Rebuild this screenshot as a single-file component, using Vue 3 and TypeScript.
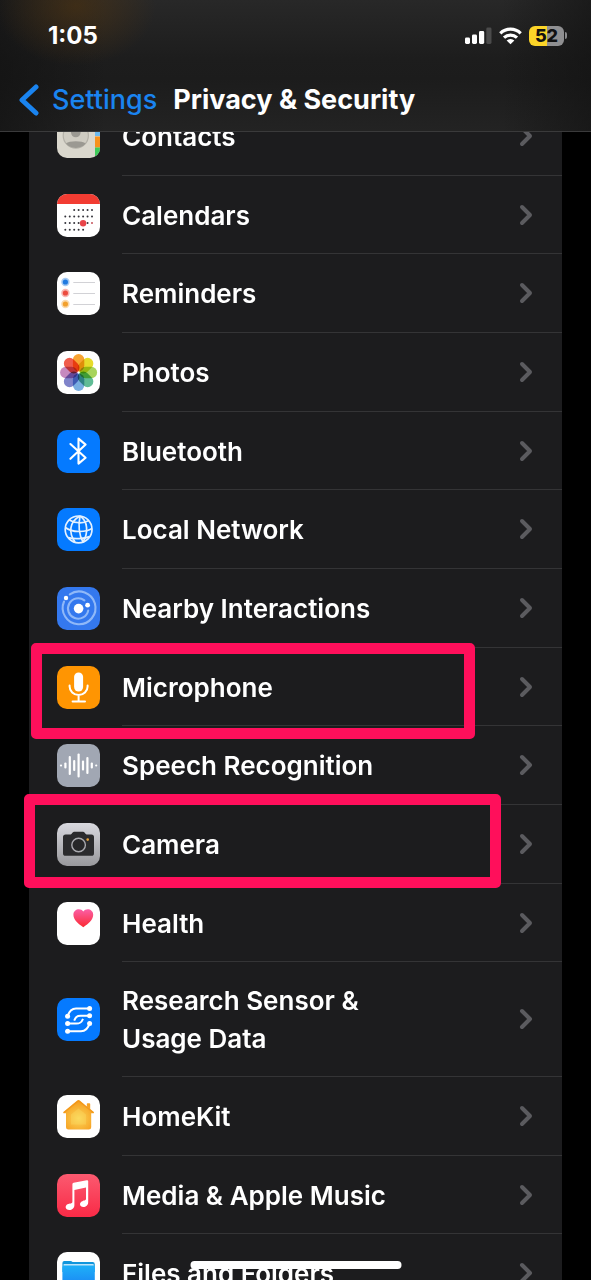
<script setup lang="ts">
interface Highlight {
  name: string
}

interface Row {
  id: string
  label: string
  lines?: string[]
  highlight?: Highlight
}

interface Dot {
  x: number
  y: number
  fill: string
}

const rows: Row[] = [
  { id: 'contacts', label: 'Contacts' },
  { id: 'calendars', label: 'Calendars' },
  { id: 'reminders', label: 'Reminders' },
  { id: 'photos', label: 'Photos' },
  { id: 'bluetooth', label: 'Bluetooth' },
  { id: 'network', label: 'Local Network' },
  { id: 'nearby', label: 'Nearby Interactions' },
  { id: 'microphone', label: 'Microphone', highlight: { name: 'mark-microphone' } },
  { id: 'speech', label: 'Speech Recognition' },
  { id: 'camera', label: 'Camera', highlight: { name: 'mark-camera' } },
  { id: 'health', label: 'Health' },
  { id: 'research', label: 'Research Sensor & Usage Data', lines: ['Research Sensor &', 'Usage Data'] },
  { id: 'homekit', label: 'HomeKit' },
  { id: 'music', label: 'Media & Apple Music' },
  { id: 'files', label: 'Files and Folders' },
]

// First and last filled column of each week in the calendar icon
const weeks: [number, number][] = [[2, 6], [0, 6], [0, 6], [0, 4]]
const calendarDots: Dot[] = weeks.flatMap(([from, to], week) =>
  Array.from({ length: to - from + 1 }, (_, i) => ({
    x: 8.3 + (from + i) * 4.45,
    y: 16 + week * 6.55,
    fill: week === 2 && from + i === 6 ? '#c4525a' : '#33333a',
  })),
)

const reminderDots = [
  { y: 10, color: '#1f7ae0' },
  { y: 21, color: '#ec4b3f' },
  { y: 32, color: '#f2a02c' },
]

const petals = ['#f79a1c', '#e5d813', '#9fd04a', '#4fb58a', '#6aa5de', '#7277c4', '#c07cb8', '#ee4a38']

const waveBars = [
  { x: 4, h: 2 }, { x: 8.4, h: 6 }, { x: 12.8, h: 19 }, { x: 17.2, h: 11 }, { x: 21.6, h: 24 },
  { x: 26, h: 10 }, { x: 30.4, h: 17 }, { x: 34.8, h: 6 }, { x: 39.2, h: 2 },
]
</script>

<template>
  <div class="screen">
    <header class="top">
      <div class="status">
        <time class="clock">1:05</time>
        <div class="indicators">
          <svg class="signal" viewBox="0 0 27 18" aria-hidden="true">
            <rect x="0" y="10.5" width="5" height="6.5" rx="1.4" fill="#fff" />
            <rect x="7" y="7.5" width="5" height="9.5" rx="1.4" fill="#fff" />
            <rect x="14" y="4" width="5.2" height="13" rx="1.4" fill="#fff" />
            <rect x="21.3" y="0.5" width="5.2" height="16.5" rx="1.4" fill="#4b4b4b" />
          </svg>
          <svg class="wifi" viewBox="0 0 23 18" aria-hidden="true">
            <g fill="none" stroke="#fff" stroke-width="3.2">
              <path d="M1.3 6.3 A14.6 14.6 0 0 1 21.7 6.3" />
              <path d="M5 10.7 A9.4 9.4 0 0 1 18 10.7" />
            </g>
            <path d="M11.5 17.3 L7.6 13.6 A5.6 5.6 0 0 1 15.4 13.6 Z" fill="#fff" />
          </svg>
          <div class="battery"><span class="cell">52</span></div>
        </div>
      </div>
      <nav class="bar">
        <a class="back" href="#settings">
          <svg class="back-icon" viewBox="0 0 20 32" aria-hidden="true">
            <path d="M17 3 L3 16 L17 29" fill="none" stroke="#1a84f0" stroke-width="5" stroke-linecap="round" stroke-linejoin="round" />
          </svg>
          <span>Settings</span>
        </a>
        <h1 class="title">Privacy &amp; Security</h1>
      </nav>
    </header>

    <main class="content">
      <ul class="card">
        <li v-for="row in rows" :key="row.id" class="item">
          <a class="row" :class="{ tall: row.lines }" :href="'#' + row.id">
            <svg class="icon" viewBox="0 0 43 43" aria-hidden="true">
              <defs>
                <clipPath :id="'clip-' + row.id"><rect width="43" height="43" rx="10" /></clipPath>
              </defs>
              <g :clip-path="'url(#clip-' + row.id + ')'">
                <template v-if="row.id === 'contacts'">
                  <rect width="43" height="43" fill="#dad7cd" />
                  <rect x="38" width="5" height="21" fill="#6cb9ee" />
                  <rect x="38" y="21.5" width="5" height="11" fill="#f7921e" />
                  <rect x="38" y="32.5" width="5" height="11" fill="#3ecb5a" />
                  <circle cx="18.8" cy="20.5" r="12.6" fill="#cfccc2" stroke="#b4b1a8" stroke-width="1.2" />
                  <circle cx="18.8" cy="17.5" r="4.8" fill="#9b9992" />
                  <path d="M9 28.6 C12 25.4 25.6 25.4 28.6 28.6 C24 34.4 13.6 34.4 9 28.6Z" fill="#9b9992" />
                </template>

                <template v-else-if="row.id === 'calendars'">
                  <rect width="43" height="43" fill="#fff" />
                  <rect width="43" height="10" fill="#f23c32" />
                  <circle v-for="(dot, i) in calendarDots" :key="i" :cx="dot.x" :cy="dot.y" r="1" :fill="dot.fill" />
                  <circle cx="26.1" cy="29.2" r="3.2" fill="#e8454a" />
                </template>

                <template v-else-if="row.id === 'reminders'">
                  <rect width="43" height="43" fill="#fff" />
                  <g v-for="dot in reminderDots" :key="dot.y">
                    <circle cx="8.4" :cy="dot.y" r="4.2" :fill="dot.color" opacity="0.4" />
                    <circle cx="8.4" :cy="dot.y" r="2.6" :fill="dot.color" />
                    <path :d="`M16.3 ${dot.y + 0.5} H38`" stroke="#d2d2d6" stroke-width="1" />
                  </g>
                </template>

                <template v-else-if="row.id === 'photos'">
                  <rect width="43" height="43" fill="#fff" />
                  <g class="petals">
                    <rect
                      v-for="(color, i) in petals"
                      :key="color"
                      class="petal"
                      x="15.9"
                      y="3"
                      width="11.4"
                      height="17.4"
                      rx="5.7"
                      :fill="color"
                      :transform="`rotate(${i * 45} 21.6 21.5)`"
                    />
                  </g>
                </template>

                <template v-else-if="row.id === 'bluetooth'">
                  <rect width="43" height="43" fill="#057aff" />
                  <path d="M13.4 14 L28.6 27.8 L21.5 33.6 V8.6 L28.6 14.6 L13.4 28.8" fill="none" stroke="#fff" stroke-width="2.1" stroke-linejoin="round" stroke-linecap="round" />
                </template>

                <template v-else-if="row.id === 'network'">
                  <rect width="43" height="43" fill="#057aff" />
                  <g fill="none" stroke="#e4f1ff" stroke-width="1.7">
                    <circle cx="21.6" cy="21.4" r="13.4" />
                    <path d="M23 8 C31 13 31.5 25 26 34" />
                    <path d="M23 8 C21.5 16 21.5 26 26 34" />
                    <path d="M23 8 C12 14 11.5 25 18 34" />
                    <path d="M12.3 12 C18 15.6 27 15.6 31.6 12.6" />
                    <path d="M8.3 19.5 C15 24.8 29 24.6 35 20.4" />
                    <path d="M11.2 29.6 C17 31.4 27 31 32.6 28.6" />
                  </g>
                </template>

                <template v-else-if="row.id === 'nearby'">
                  <rect width="43" height="43" fill="#3478ee" />
                  <g fill="none" stroke="#8fb8f8" stroke-width="2.1" stroke-linecap="round">
                    <path d="M12.8 7.4 A16.4 16.4 0 1 1 7 14.5" />
                    <path d="M31.2 23.6 A10.2 10.2 0 1 1 27.4 13.4" />
                  </g>
                  <circle cx="21.6" cy="21.6" r="4.8" fill="#fff" />
                  <circle cx="9" cy="11" r="2.2" fill="#fff" />
                  <circle cx="30.6" cy="18.2" r="2.4" fill="#fff" />
                </template>

                <template v-else-if="row.id === 'microphone'">
                  <rect width="43" height="43" fill="#ff9502" />
                  <rect x="17.1" y="6.5" width="9" height="19" rx="4.5" fill="#fff" />
                  <path d="M12.6 19.6 V20.4 A9 8.6 0 0 0 30.6 20.4 V19.6 M21.6 29 V35.4 M15.6 35.6 H28" fill="none" stroke="#fff" stroke-width="2" stroke-linecap="round" />
                </template>

                <template v-else-if="row.id === 'speech'">
                  <rect width="43" height="43" fill="#a1a7b3" />
                  <rect
                    v-for="bar in waveBars"
                    :key="bar.x"
                    :x="bar.x - 1.1"
                    :y="21.6 - bar.h / 2"
                    width="2.2"
                    :height="bar.h"
                    rx="1"
                    fill="#fff"
                  />
                </template>

                <template v-else-if="row.id === 'camera'">
                  <defs>
                    <linearGradient id="camera-fill" x1="0" y1="0" x2="0" y2="1">
                      <stop offset="0" stop-color="#d9d9df" />
                      <stop offset="1" stop-color="#98989c" />
                    </linearGradient>
                  </defs>
                  <rect width="43" height="43" fill="url(#camera-fill)" />
                  <path d="M8.6 11.4 H13.6 C15 11.4 15.4 8.8 17 8.8 H26.2 C27.8 8.8 28.2 11.4 29.6 11.4 H34.4 Q37 11.4 37 14 V30.2 Q37 32.8 34.4 32.8 H8.6 Q6 32.8 6 30.2 V14 Q6 11.4 8.6 11.4Z" fill="#2b2b2d" />
                  <circle cx="21.6" cy="22" r="6.8" fill="#262628" stroke="#a9a9ae" stroke-width="1.4" />
                  <circle cx="30.7" cy="16.6" r="1.3" fill="#e5a23c" />
                </template>

                <template v-else-if="row.id === 'health'">
                  <defs>
                    <linearGradient id="heart-fill" x1="0" y1="0" x2="0" y2="1">
                      <stop offset="0" stop-color="#fb5fa6" />
                      <stop offset="1" stop-color="#fb2a32" />
                    </linearGradient>
                  </defs>
                  <rect width="43" height="43" fill="#fff" />
                  <path d="M26.3 25.2 C21 21.6 16.4 17.8 16.4 12.8 C16.4 7.2 23.4 5.6 26.3 9.4 C29.2 5.6 36.2 7.2 36.2 12.8 C36.2 17.8 31.6 21.6 26.3 25.2Z" fill="url(#heart-fill)" />
                </template>

                <template v-else-if="row.id === 'research'">
                  <rect width="43" height="43" fill="#057aff" />
                  <g fill="none" stroke="#fff" stroke-width="2">
                    <path d="M10.6 18 C12.4 12.6 15 10.4 19 10.4 H32.6" />
                    <path d="M32.6 17.8 H23.6 C19.6 17.8 18.6 19.2 17.2 22.6" />
                    <path d="M10.6 25.6 H19.4 C23.4 25.6 24.6 24.2 26 20.8" />
                    <path d="M10.6 33.2 H24 C28.4 33.2 31 30.8 32.6 25.4" />
                  </g>
                  <g fill="#fff">
                    <circle cx="10.6" cy="18.2" r="2.5" />
                    <circle cx="10.6" cy="25.6" r="2.5" />
                    <circle cx="10.6" cy="33.2" r="2.5" />
                    <circle cx="32.6" cy="10.4" r="2.5" />
                    <circle cx="32.6" cy="17.8" r="2.5" />
                    <circle cx="32.6" cy="25.4" r="2.5" />
                  </g>
                </template>

                <template v-else-if="row.id === 'homekit'">
                  <defs>
                    <radialGradient id="home-fill" cx="0.5" cy="0.62" r="0.55">
                      <stop offset="0" stop-color="#fbd75a" />
                      <stop offset="1" stop-color="#f6a022" />
                    </radialGradient>
                  </defs>
                  <rect width="43" height="43" fill="#fff" />
                  <path d="M20.2 5.6 Q21.5 4.6 22.8 5.6 L29.8 11.4 V9 Q29.8 8.2 30.6 8.2 H32.4 Q33.2 8.2 33.2 9 V14 L36.8 16.9 Q37.6 18 36.4 18.2 H34.2 V32.2 Q34.2 34.6 31.8 34.6 H11.4 Q9 34.6 9 32.2 V18.2 H6.8 Q5.6 18 6.4 16.9Z" fill="url(#home-fill)" />
                  <path d="M7 17.4 L21.5 5.8 L36.2 17.4" fill="none" stroke="#f08f14" stroke-width="1.3" opacity="0.6" />
                  <path d="M14 29.4 V19.6 L21.5 13.6 L29 19.6 V29.4Z" fill="#fde06a" opacity="0.3" />
                </template>

                <template v-else-if="row.id === 'music'">
                  <defs>
                    <linearGradient id="music-fill" x1="0" y1="0" x2="0" y2="1">
                      <stop offset="0" stop-color="#fb5a70" />
                      <stop offset="1" stop-color="#f92a46" />
                    </linearGradient>
                  </defs>
                  <rect width="43" height="43" fill="url(#music-fill)" />
                  <path d="M15.4 10.2 Q15.4 9 16.6 8.8 L29.8 6.2 Q31.2 6 31.2 7.2 V28 C31.2 31.4 28.8 33 26.4 33 C22.4 33 21.8 28.4 25.4 27.2 C27.6 26.4 29 26.8 29 24.6 V13.6 L17.4 16 V31 C17.4 34.4 14.8 36 12.4 36 C8 36 7.4 31.2 11.2 30 C13.8 29.2 15.4 29.6 15.4 27.4Z" fill="#fff" />
                </template>

                <template v-else>
                  <defs>
                    <linearGradient id="folder-fill" x1="0" y1="0" x2="0" y2="1">
                      <stop offset="0" stop-color="#1fb0f8" />
                      <stop offset="1" stop-color="#1a86f4" />
                    </linearGradient>
                  </defs>
                  <rect width="43" height="43" fill="#fff" />
                  <path d="M5.4 11 Q5.4 9 7.4 9 H13.4 Q14.6 9 15.6 10 H35.6 Q37.8 10 37.8 12.2 V20 H5.4Z" fill="#1296dc" />
                  <rect x="6.6" y="12" width="30" height="3" fill="#bfe4fa" />
                  <rect x="5.4" y="13.6" width="32.4" height="20.4" rx="2" fill="url(#folder-fill)" />
                </template>
              </g>
            </svg>
            <span class="body">
              <span class="label">
                <template v-if="row.lines">
                  <span v-for="line in row.lines" :key="line" class="line">{{ line }}</span>
                </template>
                <template v-else>{{ row.label }}</template>
              </span>
              <svg class="chevron" viewBox="0 0 14 22" aria-hidden="true">
                <path d="M3 3 L11 11 L3 19" fill="none" stroke="#5b5b5f" stroke-width="4" stroke-linecap="round" stroke-linejoin="round" />
              </svg>
            </span>
          </a>
          <span v-if="row.highlight" class="mark" :class="row.highlight.name"></span>
        </li>
      </ul>
    </main>
    <div class="home-indicator"></div>
  </div>
</template>

<style>
body {
  background: #000;
}
</style>

<style scoped>
.screen {
  position: relative;
  display: flex;
  flex-direction: column;
  height: 100vh;
  overflow: hidden;
  background: #000;
  color: #fff;
  font-family: Inter, "Liberation Sans", sans-serif;
}

.top {
  position: relative;
  z-index: 3;
  flex: none;
  box-sizing: border-box;
  height: 132px;
  border-bottom: 1px solid #3a3a3b;
  background:
    radial-gradient(ellipse 80px 60px at 76px 6px, rgba(80, 52, 16, 0.6), transparent),
    linear-gradient(90deg, rgba(18, 18, 18, 0.7), transparent 18%, transparent 85%, rgba(18, 18, 18, 0.6)),
    linear-gradient(#282828, #1d1d1d 45%, #1c1c1c 60%, #232323);
}

.status {
  display: flex;
  align-items: center;
  justify-content: space-between;
  height: 71px;
  padding: 0 24px 0 48px;
}

.clock {
  font-size: 24px;
  font-weight: 700;
  line-height: 28px;
}

.indicators {
  display: flex;
  align-items: center;
  gap: 7px;
}

.signal {
  width: 27px;
  height: 18px;
}

.wifi {
  width: 23px;
  height: 18px;
}

.battery {
  display: flex;
  align-items: center;
  gap: 1px;
}

.battery::after {
  content: "";
  width: 2px;
  height: 7px;
  border-radius: 0 2px 2px 0;
  background: #8b8b8d;
}

.cell {
  width: 35px;
  border-radius: 6px;
  background: linear-gradient(90deg, #fbd428 52%, #8f8f91 52%);
  color: #111;
  font-size: 18px;
  font-weight: 800;
  line-height: 20px;
  text-align: center;
}

.bar {
  display: flex;
  align-items: center;
  height: 57px;
  padding: 0 19px;
  gap: 16px;
}

.back {
  display: flex;
  align-items: center;
  gap: 13px;
  color: #1a84f0;
  font-size: 27px;
  font-weight: 500;
  line-height: 32px;
  text-decoration: none;
}

.back-icon {
  width: 20px;
  height: 32px;
}

.title {
  margin: 0;
  font-size: 27px;
  font-weight: 700;
  line-height: 32px;
  white-space: nowrap;
}

.content {
  flex: 1;
  min-height: 0;
}

.card {
  margin: -35px 29px 0;
  padding: 0;
  background: #1c1c1e;
  list-style: none;
}

.item {
  position: relative;
}

.row {
  display: flex;
  align-items: center;
  gap: 22px;
  padding-left: 28px;
  color: #fff;
  text-decoration: none;
}

.icon {
  flex: none;
  width: 43px;
  height: 43px;
}

.body {
  display: flex;
  flex: 1;
  align-items: center;
  justify-content: space-between;
  padding: 19px 29px 19px 0;
  border-bottom: 1px solid #343436;
}

/* Every third row is a pixel shorter, so the average pitch stays between 78 and 79 */
.item:nth-child(3n + 2) .body {
  padding-bottom: 18px;
}

.tall .body {
  padding-top: 18px;
  padding-bottom: 18px;
}

.label {
  padding-top: 2px;
  font-size: 26px;
  font-weight: 600;
  line-height: 38px;
}

.line {
  display: block;
}

.chevron {
  flex: none;
  width: 14px;
  height: 22px;
}

.mark {
  position: absolute;
  z-index: 2;
  border: 11px solid #ff0f5b;
  border-radius: 5px;
  pointer-events: none;
}

.mark-microphone {
  top: -5px;
  right: 87px;
  bottom: -13px;
  left: 2px;
}

.mark-camera {
  top: -11px;
  right: 61px;
  bottom: -4px;
  left: -5px;
}

.home-indicator {
  position: absolute;
  z-index: 4;
  bottom: 11px;
  left: 50%;
  width: 211px;
  height: 8px;
  border-radius: 4px;
  background: #fff;
  transform: translateX(-50%);
}

.petals {
  isolation: isolate;
}

.petal {
  mix-blend-mode: multiply;
  opacity: 0.9;
}
</style>
